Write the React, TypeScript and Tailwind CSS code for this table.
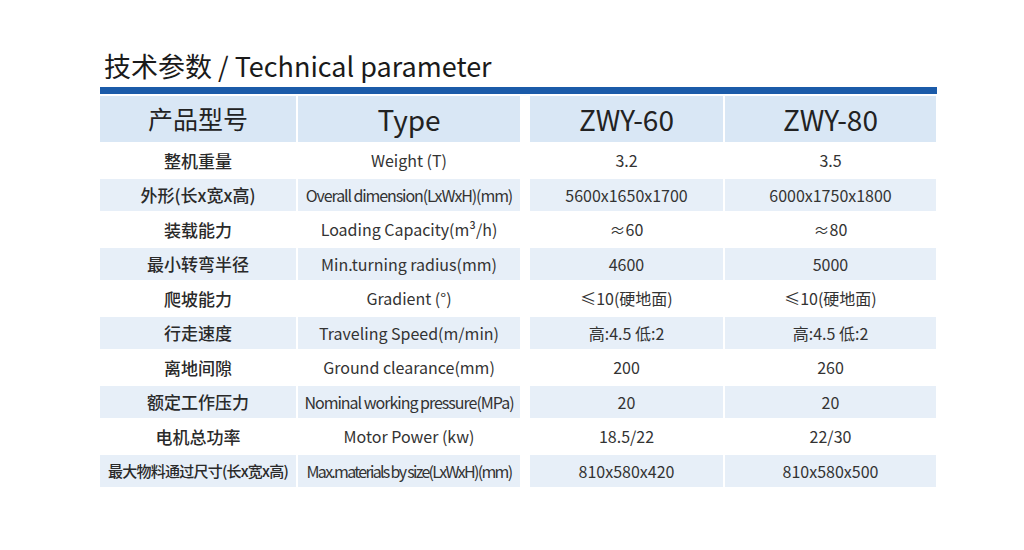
const font = { fontFamily: '"Noto Sans CJK SC", "Noto Sans", sans-serif' };

type Row = {
  cn: string;
  en: string;
  a: string;
  b: string;
  cnTight?: boolean;
  enTight?: string;
};

const rows: Row[] = [
  { cn: "整机重量", en: "Weight (T)", a: "3.2", b: "3.5" },
  { cn: "外形(长x宽x高)", en: "Overall dimension(LxWxH)(mm)", a: "5600x1650x1700", b: "6000x1750x1800", enTight: "tracking-[-1.1px]" },
  { cn: "装载能力", en: "Loading Capacity(m³/h)", a: "≈60", b: "≈80" },
  { cn: "最小转弯半径", en: "Min.turning radius(mm)", a: "4600", b: "5000" },
  { cn: "爬坡能力", en: "Gradient (°)", a: "≤10(硬地面)", b: "≤10(硬地面)" },
  { cn: "行走速度", en: "Traveling Speed(m/min)", a: "高:4.5 低:2", b: "高:4.5 低:2" },
  { cn: "离地间隙", en: "Ground clearance(mm)", a: "200", b: "260" },
  { cn: "额定工作压力", en: "Nominal working pressure(MPa)", a: "20", b: "20", enTight: "tracking-[-1px]" },
  { cn: "电机总功率", en: "Motor Power (kw)", a: "18.5/22", b: "22/30" },
  { cn: "最大物料通过尺寸(长x宽x高)", en: "Max.materials by size(LxWxH)(mm)", a: "810x580x420", b: "810x580x500", cnTight: true, enTight: "tracking-[-1.7px]" },
];

export default function App() {
  return (
    <div className="h-[550px] w-[1024px] bg-white text-[#222]" style={font}>
      <div className="pl-[100px] pt-[44px]">
        <h1 className="ml-[4px] h-[43px] text-[27px] leading-[43px] font-normal text-[#1a1a1a]">
          技术参数 / Technical parameter
        </h1>
        <div className="h-[7px] w-[837px] bg-[#1b5ba9]" />
        <div className="mt-[2px] grid w-[836px] grid-cols-[196px_230px_193px_211px] gap-x-[2px] gap-y-[2px]">
          <div className="flex h-[46px] items-center justify-center bg-[#d9e7f5] text-[25px]">产品型号</div>
          <div className="mr-[8px] flex h-[46px] items-center justify-center bg-[#d9e7f5] text-[28px]">Type</div>
          <div className="flex h-[46px] items-center justify-center bg-[#d9e7f5] text-[28px]">ZWY-60</div>
          <div className="flex h-[46px] items-center justify-center bg-[#d9e7f5] text-[28px]">ZWY-80</div>
          {rows.map((r, i) => {
            const bg = i % 2 === 1 ? "bg-[#e7eff8]" : "bg-white";
            return (
              <div key={r.cn} className="contents">
                <div
                  className={`flex h-[32.5px] items-center justify-center whitespace-nowrap font-medium text-[#2a2a2a] ${bg} ${
                    r.cnTight ? "text-[15px] tracking-[-0.75px]" : "text-[17px]"
                  }`}
                >
                  {r.cn}
                </div>
                <div
                  className={`mr-[8px] flex h-[32.5px] items-center justify-center whitespace-nowrap text-[16px] text-[#333] ${bg} ${
                    r.enTight ?? ""
                  }`}
                >
                  {r.en}
                </div>
                <div className={`flex h-[32.5px] items-center justify-center whitespace-nowrap text-[16px] text-[#333] ${bg}`}>
                  {r.a}
                </div>
                <div className={`flex h-[32.5px] items-center justify-center whitespace-nowrap text-[16px] text-[#333] ${bg}`}>
                  {r.b}
                </div>
              </div>
            );
          })}
        </div>
      </div>
    </div>
  );
}
